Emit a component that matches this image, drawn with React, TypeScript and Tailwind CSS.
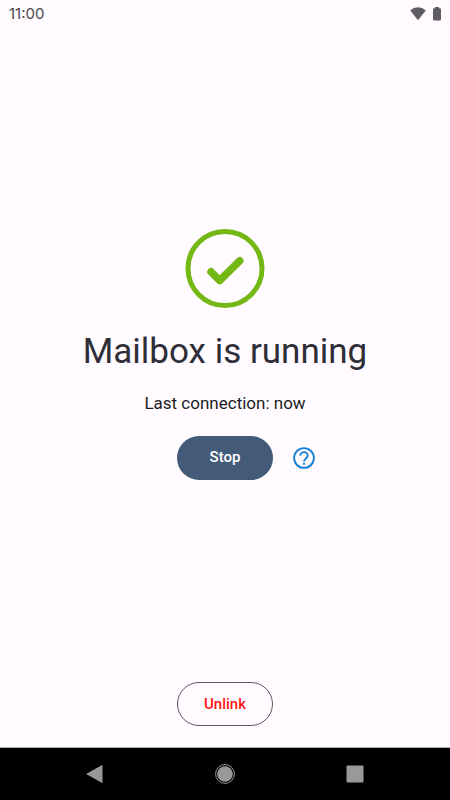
function StatusBar() {
  return (
    <header className="flex h-7 items-center justify-between pl-[9px] pr-2 text-[#5f5d61]">
      <span className="font-[Inter,sans-serif] text-[15px] text-[#49474b]">11:00</span>
      <div className="flex items-center gap-[5px]">
        <svg width="18" height="14" viewBox="0 0 18 14" fill="currentColor" aria-label="Wi-Fi">
          <path d="M9 13.200 1.200 3.400Q4.600 0.200 9 0.200T16.800 3.400Z" />
        </svg>
        <svg width="10" height="14" viewBox="0 0 10 14" fill="currentColor" aria-label="Battery">
          <path d="M3 0h4v1.300h1a1 1 0 0 1 1 1V12.600a1 1 0 0 1-1 1H2a1 1 0 0 1-1-1V2.300a1 1 0 0 1 1-1h1z" />
        </svg>
      </div>
    </header>
  )
}

function NavBar() {
  return (
    <nav className="grid h-[53px] grid-cols-3 items-center border-t border-[#b3afb3] bg-black px-[30px] text-[#999999]">
      <button aria-label="Back" className="justify-self-center">
        <svg width="18" height="20" viewBox="0 0 18 20" fill="currentColor">
          <path d="M16.500 1.600v16.800q0 .8-.8.4L1 10.600q-.8-.6 0-1.200L15.700 1.200q.8-.4.8.4z" />
        </svg>
      </button>
      <button aria-label="Home" className="justify-self-center">
        <svg width="20" height="20" viewBox="0 0 20 20">
          <circle cx="10" cy="10" r="9.400" fill="none" stroke="currentColor" strokeWidth="1" />
          <circle cx="10" cy="10" r="7.800" fill="currentColor" />
        </svg>
      </button>
      <button aria-label="Recent apps" className="justify-self-center">
        <svg width="18" height="18" viewBox="0 0 18 18" fill="currentColor">
          <rect x="0.500" y="0.500" width="17" height="17" rx="1" />
        </svg>
      </button>
    </nav>
  )
}

export default function App() {
  return (
    <div className="flex min-h-screen flex-col bg-[#fffbff] font-[Roboto,sans-serif] text-[#1b1b1f]">
      <StatusBar />

      <main className="flex flex-1 flex-col items-center pb-[21px]">
        <div className="flex w-full flex-1 flex-col items-center justify-center pb-[3px]">
          <svg width="80" height="80" viewBox="0 0 80 80" fill="none" stroke="#74b816">
            <circle cx="40" cy="40.500" r="37" strokeWidth="5" />
            <path d="M26 43.800 34.700 52.500 54.800 32.800" strokeWidth="7.500" strokeLinecap="round" strokeLinejoin="round" />
          </svg>

          <h1 className="mt-[22px] text-[35px] leading-[44px] text-[#2e2d38]">Mailbox is running</h1>
          <p className="mt-4 text-[17px] leading-[26px]">Last connection: now</p>

          <div className="mt-5 grid w-full grid-cols-[1fr_auto_1fr] items-center gap-[18px]">
            <button className="col-start-2 h-11 w-24 rounded-full bg-[#435b78] text-[15px] font-medium text-white">
              Stop
            </button>
            <button aria-label="Help" className="justify-self-start text-[#1680d8]">
              <svg width="26" height="26" viewBox="0 0 26 26" fill="none" stroke="currentColor" strokeWidth="1.900">
                <circle cx="13" cy="13" r="9.900" />
                <path d="M9.300 10.800a3.700 3.700 0 0 1 7.400 0c0 2.500-3.700 2.900-3.700 5.700" />
                <path d="M12 17.800h2v2h-2z" fill="currentColor" stroke="none" />
              </svg>
            </button>
          </div>
        </div>

        <button className="h-11 w-24 rounded-full border border-[#5a5964] text-[15px] font-medium text-[#ff1414]">
          Unlink
        </button>
      </main>

      <NavBar />
    </div>
  )
}
